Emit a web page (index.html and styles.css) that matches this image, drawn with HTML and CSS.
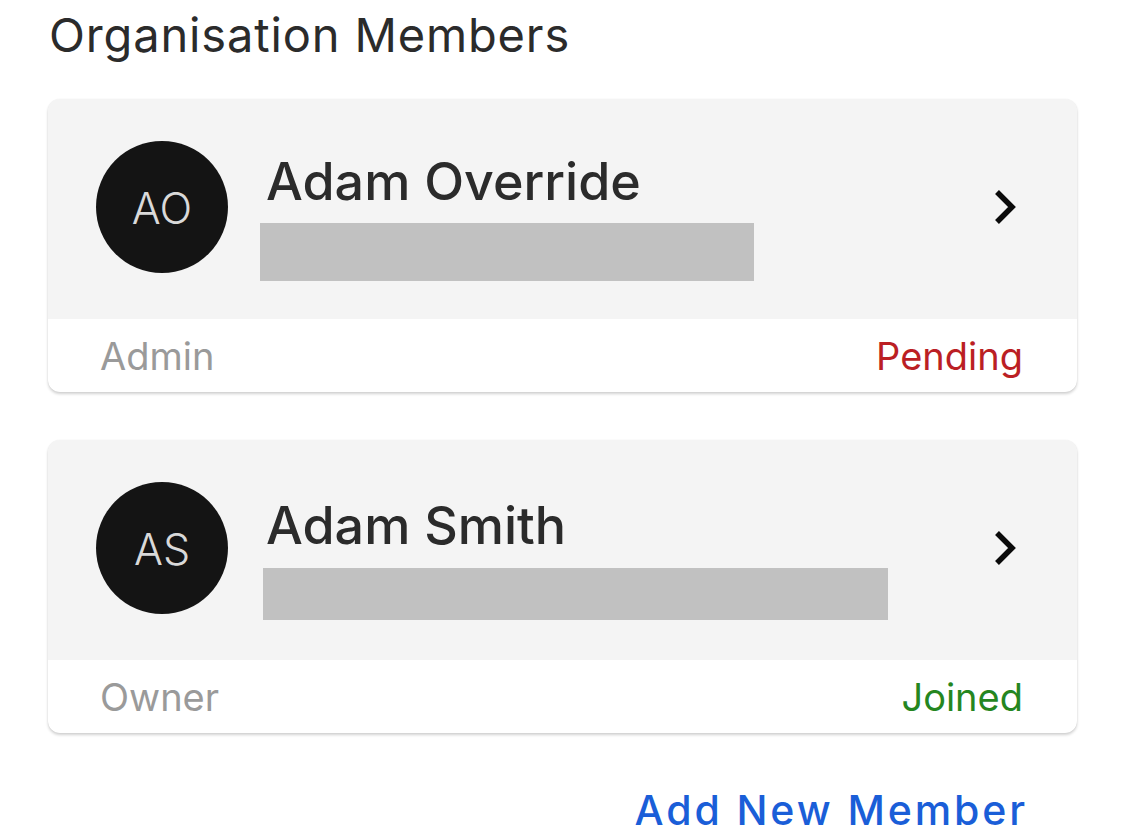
FILE: index.html
```html
<!DOCTYPE html>
<html lang="en">
<head>
<meta charset="utf-8">
<title>Organisation Members</title>
<link rel="stylesheet" href="styles.css">
</head>
<body>
<main class="page">
  <h1 class="title">Organisation Members</h1>
  <section class="members">
    <article class="card">
      <div class="card-top">
        <div class="avatar">AO</div>
        <div class="info">
          <div class="name">Adam Override</div>
          <div class="redacted redacted-1"></div>
        </div>
        <svg class="chevron" width="24" height="36" viewBox="0 0 24 36"><polyline points="3,3 18,18 3,33" fill="none" stroke="#0a0a0a" stroke-width="5.5" stroke-linecap="butt" stroke-linejoin="miter"/></svg>
      </div>
      <div class="card-bottom">
        <span class="role">Admin</span>
        <span class="status pending">Pending</span>
      </div>
    </article>
    <article class="card">
      <div class="card-top">
        <div class="avatar">AS</div>
        <div class="info">
          <div class="name">Adam Smith</div>
          <div class="redacted redacted-2"></div>
        </div>
        <svg class="chevron" width="24" height="36" viewBox="0 0 24 36"><polyline points="3,3 18,18 3,33" fill="none" stroke="#0a0a0a" stroke-width="5.5" stroke-linecap="butt" stroke-linejoin="miter"/></svg>
      </div>
      <div class="card-bottom">
        <span class="role">Owner</span>
        <span class="status joined">Joined</span>
      </div>
    </article>
  </section>
  <div class="actions">
    <a class="add-link" href="#">Add New Member</a>
  </div>
</main>
</body>
</html>
```

FILE: styles.css
```css
* { box-sizing: border-box; }
html, body { margin: 0; padding: 0; background: #ffffff; }
body {
  font-family: Inter, Roboto, "Liberation Sans", sans-serif;
  color: #2b2b2b;
  width: 1125px;
  height: 840px;
  overflow: hidden;
}
.page { padding: 0 48px; }
.title {
  margin: 0;
  padding: 6px 0 0 1px;
  font-size: 47px;
  font-weight: 400;
  line-height: 58px;
  letter-spacing: 0.85px;
  color: #2b2b2b;
}
.members {
  display: flex;
  flex-direction: column;
  gap: 48px;
  margin-top: 35px;
}
.card {
  border-radius: 12px;
  overflow: hidden;
  background: #fff;
  box-shadow: 0 2px 3px rgba(0,0,0,0.18), 0 0 1px rgba(0,0,0,0.12);
}
.card-top {
  height: 220px;
  background: #f4f4f4;
  display: flex;
  align-items: center;
  padding: 0 59px 4px 48px;
}
.avatar {
  width: 132px;
  height: 132px;
  border-radius: 50%;
  background: #141414;
  color: #d9d9d9;
  display: flex;
  align-items: center;
  justify-content: center;
  font-size: 43px;
  font-weight: 300;
  flex-shrink: 0;
  padding-top: 2px;
}
.info {
  flex: 1;
  margin-left: 32px;
  display: flex;
  flex-direction: column;
  padding-top: 18px;
}
.name {
  font-size: 52px;
  line-height: 62px;
  font-weight: 500;
  color: #2b2b2b;
  padding-left: 6px;
}
.redacted { background: #c1c1c1; height: 58px; margin-top: 10px; }
.redacted-1 { width: 494px; }
.redacted-2 { width: 625px; height: 52px; margin-left: 3px; margin-top: 11px; }
.chevron { flex-shrink: 0; }
.card-bottom {
  height: 73px;
  display: flex;
  align-items: center;
  justify-content: space-between;
  padding: 0 54px 0 52px;
  font-size: 38px;
}
.role { color: #9a9a9a; }
.status.pending { color: #bb1f24; }
.status.joined { color: #25861f; }
.actions {
  display: flex;
  justify-content: flex-end;
  padding: 52px 49px 0 0;
}
.add-link {
  color: #1a5ed8;
  text-decoration: none;
  font-size: 41px;
  font-weight: 500;
  letter-spacing: 2.9px;
}
```
